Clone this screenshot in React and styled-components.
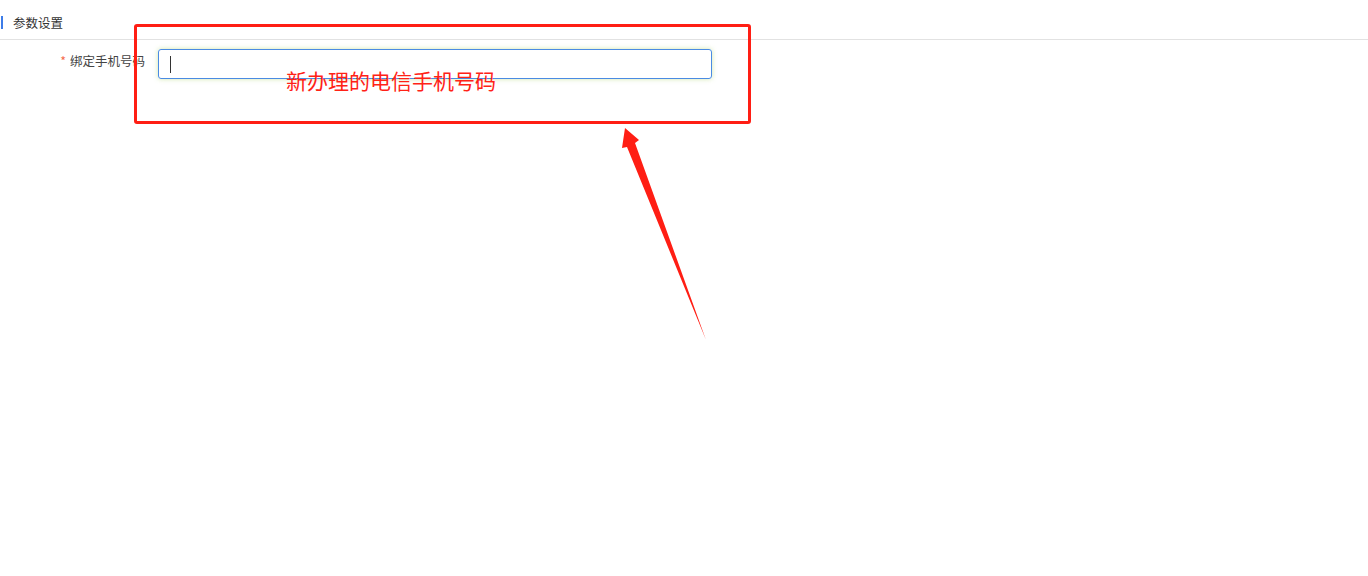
import styled, { createGlobalStyle } from "styled-components";

const GlobalStyle = createGlobalStyle`
  html, body {
    margin: 0;
    padding: 0;
    background: #fff;
  }
  body {
    font-family: "Noto Sans CJK SC", "Noto Sans", sans-serif;
    color: #333;
  }
`;

const Page = styled.div`
  position: relative;
  width: 1368px;
  height: 576px;
  overflow: hidden;
`;

const Header = styled.div`
  display: flex;
  align-items: center;
  height: 39px;
  border-bottom: 1px solid #e2e2e2;
  padding-left: 1px;
`;

const Bar = styled.span`
  width: 2px;
  height: 13px;
  background: #3d7ce8;
  margin-right: 10px;
  margin-top: 6px;
`;

const Title = styled.span`
  font-size: 12.5px;
  color: #333;
  margin-top: 6px;
`;

const FormRow = styled.div`
  display: flex;
  align-items: flex-start;
  padding-top: 9px;
`;

const Label = styled.label`
  width: 145px;
  text-align: right;
  font-size: 12.5px;
  line-height: 24px;
  color: #444;
  margin-right: 13px;
`;

const Required = styled.span`
  color: #f56c4c;
  margin-right: 4px;
`;

const InputBox = styled.div`
  display: flex;
  align-items: center;
  box-sizing: border-box;
  width: 554px;
  height: 30px;
  border: 1px solid #4a8be3;
  border-radius: 3px;
  padding-left: 11px;
  box-shadow: 0 0 5px rgba(190, 220, 140, 0.7);
`;

const Caret = styled.span`
  width: 1px;
  height: 17px;
  background: #333;
`;

const Callout = styled.div`
  position: absolute;
  left: 134px;
  top: 24px;
  width: 617px;
  height: 100px;
  box-sizing: border-box;
  border: 3px solid #ff1e14;
  border-radius: 3px;
`;

const Note = styled.div`
  position: absolute;
  left: 286px;
  top: 66px;
  font-size: 21px;
  line-height: 28px;
  color: #ff2216;
  white-space: nowrap;
`;

const Arrow = styled.svg`
  position: absolute;
  left: 0;
  top: 0;
  pointer-events: none;
`;

export default function App() {
  return (
    <>
      <GlobalStyle />
      <Page>
        <Header>
          <Bar />
          <Title>参数设置</Title>
        </Header>
        <FormRow>
          <Label>
            <Required>*</Required>绑定手机号码
          </Label>
          <InputBox>
            <Caret />
          </InputBox>
        </FormRow>

        <Callout />
        <Note>新办理的电信手机号码</Note>
        <Arrow width="1368" height="576" viewBox="0 0 1368 576">
          <polygon
            points="706,340 635,143 639,140 625,128 622,148 627,147"
            fill="#ff1e14"
          />
        </Arrow>
      </Page>
    </>
  );
}
